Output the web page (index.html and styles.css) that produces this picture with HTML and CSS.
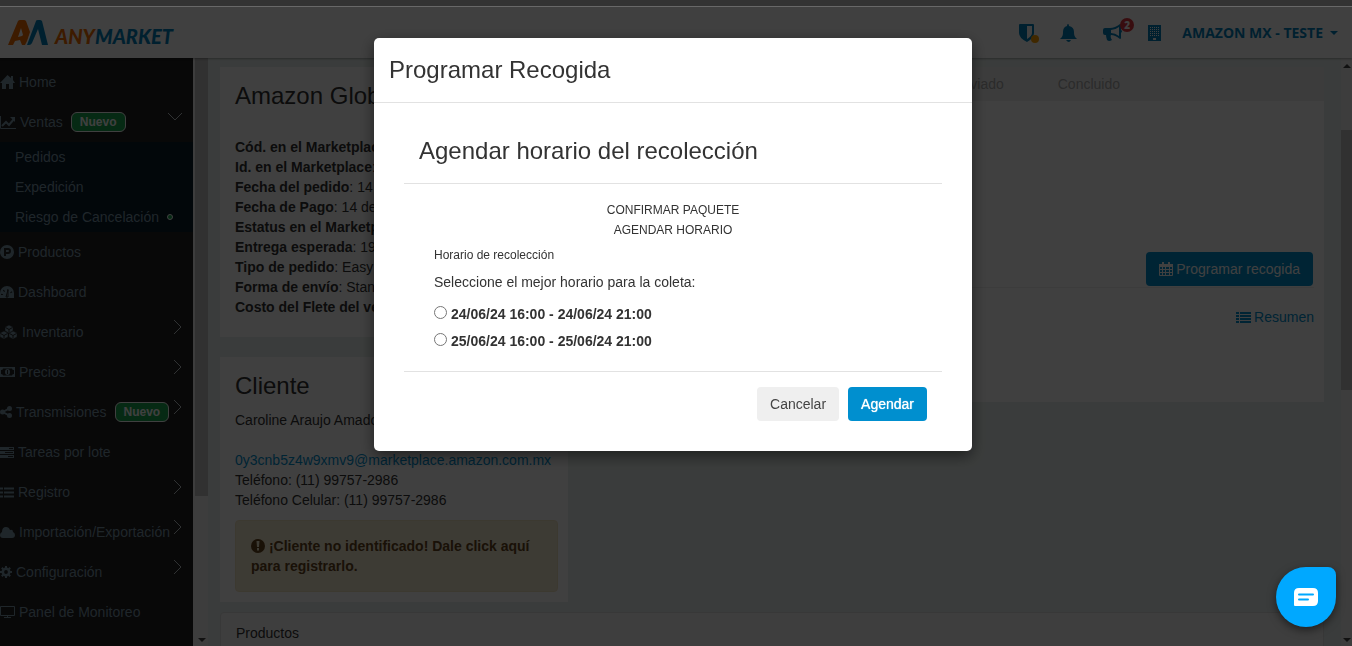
FILE: index.html
```html
<!DOCTYPE html>
<html lang="es">

<head>
    <meta charset="UTF-8">
    <meta name="viewport" content="width=device-width, initial-scale=1.0">
    <title>ANYMARKET - Programar Recogida</title>
    <link rel="stylesheet" href="styles.css">
</head>

<body>
    <div class="window-edge"></div>

    <header class="topbar">
        <a class="logo" href="#">
            <svg width="40" height="26" viewBox="0 0 40 26">
                <path fill="#f36c00" fill-rule="evenodd" d="M0 25 10 1q1-1 2-1h4q1 0 2 1l4 11-3 9-2 4h-3l-2-5-5 1-2 4zM10 17l4-1 1-1-2-7z" />
                <path fill="#0081bb" d="M19 25 28 1q0-1 2-1h2q1 0 2 1l6 24h-6L30 9l-6 14q-1 2-3 2z" />
            </svg>
            <span class="logo-text"><span class="logo-any">ANY</span>MARKET</span>
        </a>
        <nav class="tools">
            <a class="tool" href="#" title="Seguridad">
                <svg width="15" height="18" viewBox="0 0 15 18">
                    <path fill="currentColor" fill-rule="evenodd" d="M0 1q0-1 1-1h13q1 0 1 1v8q0 5-7 9Q0 14 0 9zM8 2v13q5-3 5-6V2z" />
                </svg>
                <span class="dot"></span>
            </a>
            <a class="tool" href="#" title="Avisos">
                <svg width="17" height="18" viewBox="0 0 17 18">
                    <path fill="currentColor" d="M8 0q1 0 1 2 5 1 5 6c0 4 1 5 3 7H0c2-2 3-3 3-7q0-5 4-6 0-2 1-2zM6 16h5q-2 4-5 0z" />
                </svg>
            </a>
            <a class="tool" href="#" title="Novedades">
                <svg width="19" height="17" viewBox="0 0 19 17">
                    <path fill="currentColor" fill-rule="evenodd" d="M17 0q1 0 1 1v5q2 1 0 3v5q0 1-1 1-5-4-9-4-1 2 1 5-3 2-5 0-1-3-1-5H2q-2 0-2-2V6q0-2 2-2h5q5 0 10-4zM16 3q-4 3-8 3v3q4 0 8 3z" />
                </svg>
                <span class="count">2</span>
            </a>
            <a class="tool" href="#" title="Empresa">
                <svg width="13" height="16" viewBox="0 0 13 16">
                    <path fill="currentColor" d="M0 0h13v16H0z" />
                    <path stroke="#fff" stroke-width="1" stroke-dasharray="1 1" d="M2 2.500h9M2 4.500h9M2 6.500h9M2 8.500h9M2 10.500h9" />
                    <path fill="#fff" d="M5 13h3v2H5z" />
                </svg>
            </a>
            <button class="account" type="button">AMAZON MX - TESTE <span class="caret"></span></button>
        </nav>
    </header>

    <div class="layout">
        <aside class="sidebar">
            <a class="item" href="#">
                <svg width="15" height="14" viewBox="0 0 15 14">
                    <path fill="currentColor" d="M7.500 0 11 3V1h2v4l2 3h-2v6H9V9H6v5H2V8H0z" />
                </svg>
                Home
            </a>
            <a class="item" href="#">
                <svg width="16" height="13" viewBox="0 0 16 13">
                    <path fill="none" stroke="currentColor" d="M.5 0v12.500H16" />
                    <path fill="none" stroke="currentColor" stroke-width="2" d="m2 10 4-4 3 3 5-6" />
                    <path fill="currentColor" d="M10 1h5v5z" />
                </svg>
                Ventas
                <span class="badge">Nuevo</span>
                <svg class="chevron" width="14" height="8" viewBox="0 0 14 8">
                    <path fill="none" stroke="currentColor" d="m0 0 7 7 7-7" />
                </svg>
            </a>
            <div class="submenu">
                <a href="#">Pedidos</a>
                <a href="#">Expedición</a>
                <a href="#">Riesgo de Cancelación <span class="status"></span></a>
            </div>
            <a class="item" href="#">
                <svg width="14" height="14" viewBox="0 0 14 14">
                    <circle cx="7" cy="7" r="7" fill="currentColor" />
                    <path fill="none" stroke="#242424" stroke-width="2" d="M5 11V4h3q2 0 2 2t-2 2H5" />
                </svg>
                Productos
            </a>
            <a class="item" href="#">
                <svg width="14" height="12" viewBox="0 0 14 12">
                    <path fill="currentColor" d="M0 12V7a7 7 0 0 1 14 0v5z" />
                    <path fill="none" stroke="#242424" stroke-width="2" stroke-dasharray="1 3" d="M2 9a5 5 0 0 1 10 0" />
                    <path fill="none" stroke="#242424" d="m6 11 2-7v7z" />
                </svg>
                Dashboard
            </a>
            <a class="item" href="#">
                <svg width="18" height="14" viewBox="0 0 18 14">
                    <path fill="currentColor" stroke="#242424" stroke-width=".5" d="m9 0 4 2v4L9 8 5 6V2zM4 6l4 2v4l-4 2-4-2V8zM13 6l4 2v4l-4 2-4-2V8z" />
                    <path fill="none" stroke="#242424" d="m5.500 2.500 3.500 2 3.500-2M9 4.500V7M.5 8.500l3.500 2 3.500-2M4 10.500V13M9.500 8.500l3.500 2 3.500-2M13 10.500V13" />
                </svg>
                Inventario
                <svg class="chevron" width="8" height="14" viewBox="0 0 8 14">
                    <path fill="none" stroke="currentColor" d="m0 0 7 7-7 7" />
                </svg>
            </a>
            <a class="item" href="#">
                <svg width="15" height="10" viewBox="0 0 15 10">
                    <path fill="currentColor" fill-rule="evenodd" d="M0 0h15v10H0zM3 1.500q0 1.500-2 1.500v4q2 0 2 1.500h9q0-1.500 2-1.500V3q-2 0-2-1.500z" />
                    <ellipse cx="7.500" cy="5" rx="2.500" ry="3" fill="currentColor" />
                    <path fill="#242424" d="M7 3h1v4H7z" />
                </svg>
                Precios
                <svg class="chevron" width="8" height="14" viewBox="0 0 8 14">
                    <path fill="none" stroke="currentColor" d="m0 0 7 7-7 7" />
                </svg>
            </a>
            <a class="item" href="#">
                <svg width="12" height="12" viewBox="0 0 12 12">
                    <path fill="none" stroke="currentColor" stroke-width="2" d="m9 2.500-6 3.500 6 3.500" />
                    <circle cx="2.500" cy="6" r="2.500" fill="currentColor" />
                    <circle cx="9.500" cy="2.500" r="2.500" fill="currentColor" />
                    <circle cx="9.500" cy="9.500" r="2.500" fill="currentColor" />
                </svg>
                Transmisiones
                <span class="badge">Nuevo</span>
                <svg class="chevron" width="8" height="14" viewBox="0 0 8 14">
                    <path fill="none" stroke="currentColor" d="m0 0 7 7-7 7" />
                </svg>
            </a>
            <a class="item" href="#">
                <svg width="14" height="11" viewBox="0 0 14 11">
                    <path fill="currentColor" d="M0 0h14v3H0zM0 4h14v3H0zM0 8h14v3H0z" />
                    <path stroke="#242424" d="M9 1.500h4M5 5.500h8M8 9.500h5" />
                </svg>
                Tareas por lote
            </a>
            <a class="item" href="#">
                <svg width="14" height="11" viewBox="0 0 14 11">
                    <path stroke="currentColor" stroke-width="2" d="M0 1.500h3M4 1.500h10M0 5.500h3M4 5.500h10M0 9.500h3M4 9.500h10" />
                </svg>
                Registro
                <svg class="chevron" width="8" height="14" viewBox="0 0 8 14">
                    <path fill="none" stroke="currentColor" d="m0 0 7 7-7 7" />
                </svg>
            </a>
            <a class="item" href="#">
                <svg width="15" height="11" viewBox="0 0 15 11">
                    <path fill="currentColor" d="M3 11Q0 11 0 8q0-2 2-3 0-5 4-5 3 0 4 3 3-1 3 2 2 1 2 3 0 3-3 3z" />
                </svg>
                Importación/Exportación
                <svg class="chevron" width="8" height="14" viewBox="0 0 8 14">
                    <path fill="none" stroke="currentColor" d="m0 0 7 7-7 7" />
                </svg>
            </a>
            <a class="item" href="#">
                <svg width="12" height="12" viewBox="0 0 12 12">
                    <circle cx="6" cy="6" r="3.200" fill="none" stroke="currentColor" stroke-width="2.600" />
                    <path stroke="currentColor" stroke-width="2" d="M6 0v2M6 10v2M0 6h2M10 6h2M1.800 1.800l1.400 1.400M8.800 8.800l1.400 1.400M10.200 1.800 8.800 3.200M3.200 8.800l-1.400 1.400" />
                </svg>
                Configuración
                <svg class="chevron" width="8" height="14" viewBox="0 0 8 14">
                    <path fill="none" stroke="currentColor" d="m0 0 7 7-7 7" />
                </svg>
            </a>
            <a class="item" href="#">
                <svg width="15" height="12" viewBox="0 0 15 12">
                    <path fill="none" stroke="currentColor" d="M.5.5h14v9H.5zM7.500 10v1.500M4 11.500h7" />
                </svg>
                Panel de Monitoreo
            </a>
        </aside>

        <div class="scroll scroll-left">
            <span class="thumb"></span>
            <span class="arrow arrow-down"></span>
        </div>

        <main class="content">
            <div class="columns">
                <div class="left-column">
                    <section class="panel order">
                        <h2>Amazon Global</h2>
                        <ul>
                            <li><b>Cód. en el Marketplace</b>:</li>
                            <li><b>Id. en el Marketplace</b>:</li>
                            <li><b>Fecha del pedido</b>: 14 de</li>
                            <li><b>Fecha de Pago</b>: 14 de</li>
                            <li><b>Estatus en el Marketplace</b>:</li>
                            <li><b>Entrega esperada</b>: 19 de</li>
                            <li><b>Tipo de pedido</b>: Easy</li>
                            <li><b>Forma de envío</b>: Standard</li>
                            <li><b>Costo del Flete del vendedor</b>:</li>
                        </ul>
                    </section>
                    <section class="panel customer">
                        <h2>Cliente</h2>
                        <p class="customer-name">Caroline Araujo Amador</p>
                        <p><a href="#">0y3cnb5z4w9xmv9@marketplace.amazon.com.mx</a></p>
                        <p>Teléfono: (11) 99757-2986</p>
                        <p>Teléfono Celular: (11) 99757-2986</p>
                        <div class="warning">
                            <svg width="14" height="14" viewBox="0 0 14 14">
                                <circle cx="7" cy="7" r="7" fill="currentColor" />
                                <path fill="#f4ead0" d="M5.500 2h3L8 8H6zM6 9h2v2.500H6z" />
                            </svg>
                            ¡Cliente no identificado! Dale click aquí para registrarlo.
                        </div>
                    </section>
                </div>
                <section class="panel shipping">
                    <div class="steps">
                        <span>Enviado</span>
                        <span>Concluido</span>
                    </div>
                    <div class="shipping-action">
                        <button class="btn btn-primary" type="button">
                            <svg width="14" height="14" viewBox="0 0 14 14">
                                <path fill="none" stroke="currentColor" d="M.5 2.500h13v11H.5zM1 7.500h12M1 10.500h12M3.500 5v8M6.500 5v8M10.500 5v8" />
                                <path fill="currentColor" d="M0 2h14v3H0zM3 0h2v4H3zM9 0h2v4H9z" />
                            </svg>
                            Programar recogida
                        </button>
                    </div>
                    <a class="summary" href="#">
                        <svg width="15" height="11" viewBox="0 0 15 11">
                            <path stroke="currentColor" stroke-width="2" d="M0 1h3M4 1h11M0 4h3M4 4h11M0 7h3M4 7h11M0 10h3M4 10h11" />
                        </svg>
                        Resumen
                    </a>
                </section>
            </div>
            <section class="products">Productos</section>
        </main>

        <div class="scroll scroll-right">
            <span class="arrow arrow-up"></span>
            <span class="thumb"></span>
            <span class="arrow arrow-down"></span>
        </div>
    </div>

    <div class="backdrop">
        <div class="modal" role="dialog" aria-labelledby="modal-title">
            <div class="modal-header">
                <h3 id="modal-title">Programar Recogida</h3>
            </div>
            <form class="modal-body">
                <div class="modal-header">
                    <h3>Agendar horario del recolección</h3>
                </div>
                <div class="schedule">
                    <div class="wizard">
                        <div>CONFIRMAR PAQUETE</div>
                        <div>AGENDAR HORARIO</div>
                    </div>
                    <p class="subtitle">Horario de recolección</p>
                    <p class="question">Seleccione el mejor horario para la coleta:</p>
                    <div class="option">
                        <input type="radio" id="slot-1" name="slot">
                        <label for="slot-1">24/06/24 16:00 - 24/06/24 21:00</label>
                    </div>
                    <div class="option">
                        <input type="radio" id="slot-2" name="slot">
                        <label for="slot-2">25/06/24 16:00 - 25/06/24 21:00</label>
                    </div>
                </div>
                <div class="modal-footer">
                    <button class="btn btn-default" type="button">Cancelar</button>
                    <button class="btn btn-primary btn-strong" type="button">Agendar</button>
                </div>
            </form>
        </div>
    </div>

    <button class="chat" type="button" aria-label="Chat">
        <svg width="24" height="18" viewBox="0 0 24 18">
            <path fill="#fff" d="M5 0h14q5 0 5 5v8q0 5-5 5H1q-1 0-1-1V5q0-5 5-5z" />
            <path stroke="#00a8ff" stroke-width="2" stroke-linecap="round" d="M5 6.500h14M5 11.500h9" />
        </svg>
    </button>
</body>

</html>
```

FILE: styles.css
```css
* {
    margin: 0;
    padding: 0;
    box-sizing: border-box;
}

body {
    height: 100vh;
    display: flex;
    flex-direction: column;
    overflow: hidden;
    font-family: "Liberation Sans", Arial, sans-serif;
    font-size: 14px;
    line-height: 20px;
    color: #333;
    background-color: #e8f0ee;
}

a {
    color: #008fcf;
    text-decoration: none;
}

button {
    font-family: inherit;
    font-size: 14px;
    line-height: 20px;
    border: none;
    cursor: pointer;
}

svg {
    flex-shrink: 0;
}

h2,
h3 {
    font-size: 24px;
    font-weight: 500;
    line-height: 34px;
}

ul {
    list-style: none;
}

.window-edge {
    flex: none;
    height: 7px;
    background-color: #333;
    border-bottom: 1px solid #6b6b6b;
}

/* top bar */

.topbar {
    flex: none;
    height: 51px;
    display: flex;
    align-items: center;
    justify-content: space-between;
    padding: 0 14px 0 8px;
    background-color: #fff;
    box-shadow: 0 1px 2px rgba(0, 0, 0, 0.3);
    position: relative;
}

.logo {
    display: flex;
    align-items: center;
    gap: 7px;
}

.logo-text {
    font-family: Lato, sans-serif;
    font-size: 20px;
    font-weight: 900;
    font-style: italic;
    color: #0081bb;
    padding-top: 6px;
}

.logo-any {
    color: #f36c00;
}

.tools {
    display: flex;
    align-items: center;
    gap: 26px;
}

.tool {
    position: relative;
    display: flex;
    color: #0081bb;
}

.dot {
    position: absolute;
    right: -5px;
    bottom: -1px;
    width: 8px;
    height: 8px;
    border-radius: 50%;
    background-color: #ffa000;
}

.count {
    position: absolute;
    top: -6px;
    right: -12px;
    width: 14px;
    height: 14px;
    border-radius: 50%;
    background-color: #e0353f;
    color: #fff;
    font-family: "Open Sans", sans-serif;
    font-size: 10px;
    font-weight: 800;
    line-height: 14px;
    text-align: center;
}

.account {
    display: flex;
    align-items: center;
    gap: 7px;
    margin-left: -5px;
    background: none;
    color: #0081bb;
    font-family: "Open Sans", sans-serif;
    font-weight: 700;
}

.caret {
    border: 4px solid transparent;
    border-top-color: #0081bb;
    border-bottom: none;
}

/* sidebar */

.layout {
    flex: 1;
    min-height: 0;
    display: flex;
    overflow: hidden;
}

.sidebar {
    flex: none;
    width: 193px;
    padding-top: 4px;
    overflow: hidden;
    background-color: #202020;
}

.item {
    height: 40px;
    display: flex;
    align-items: center;
    gap: 4px;
    padding-right: 11px;
    white-space: nowrap;
    color: #7d98a8;
}

.badge {
    margin-left: 4px;
    padding: 0 8px;
    border: 1px solid #fff;
    border-radius: 6px;
    background-color: #18a850;
    color: #fff;
    font-size: 12px;
    font-weight: 700;
    line-height: 18px;
}

.chevron {
    margin: 0 0 10px auto;
    color: #c0c8cc;
}

.submenu {
    background-color: #081c28;
}

.submenu a {
    height: 30px;
    display: flex;
    align-items: center;
    gap: 8px;
    padding-left: 15px;
    color: #7d98a8;
}

.status {
    width: 6px;
    height: 6px;
    border: 1px solid #fff;
    border-radius: 50%;
    background-color: #18a850;
}

/* scroll bars */

.scroll {
    flex: none;
    display: flex;
    flex-direction: column;
    align-items: center;
    background-color: #f1f1f1;
}

.scroll .thumb {
    width: 100%;
    background-color: #c1c1c1;
}

.scroll-left {
    width: 15px;
    padding: 0 0 4px 2px;
}

.scroll-left .thumb {
    height: 75%;
}

.scroll-right {
    width: 11px;
    padding: 6px 0 4px;
}

.scroll-right .thumb {
    height: 45%;
    margin-top: 62px;
}

.arrow {
    border: 4px solid transparent;
}

.arrow-up {
    border-top: none;
    border-bottom-color: #444;
}

.arrow-down {
    margin-top: auto;
    border-bottom: none;
    border-top-color: #444;
}

/* order page */

.content {
    flex: 1;
    min-width: 0;
    padding: 9px 17px 0 12px;
    overflow: hidden;
}

.columns {
    display: flex;
    align-items: flex-start;
    gap: 20px;
    margin-bottom: 10px;
}

.left-column {
    flex: none;
    width: 348px;
}

.panel {
    background-color: #fff;
}

.order {
    padding: 12px 15px 20px;
    margin-bottom: 20px;
}

.order h2 {
    margin-bottom: 24px;
}

.customer {
    padding: 12px 10px 10px 15px;
}

.customer h2 {
    margin-bottom: 7px;
}

.customer-name {
    margin-bottom: 20px;
}

.warning {
    margin-top: 10px;
    padding: 15px;
    border: 1px solid #f0e2c0;
    border-radius: 4px;
    background-color: #f4ead0;
    color: #66451c;
    font-weight: 700;
}

.warning svg {
    vertical-align: -2px;
}

.shipping {
    flex: 1;
    padding-bottom: 75px;
}

.steps {
    display: flex;
    justify-content: flex-end;
    gap: 54px;
    padding: 7px 204px 7px 0;
    background-color: #f0f0f0;
    color: #aaa;
}

.shipping-action {
    display: flex;
    justify-content: flex-end;
    margin: 0 10px 19px;
    padding: 151px 1px 1px 0;
    border-bottom: 1px solid #eee;
}

.summary {
    display: flex;
    justify-content: flex-end;
    align-items: center;
    gap: 3px;
    padding-right: 10px;
}

.products {
    padding: 10px 15px;
    border: 1px solid #ddd;
    border-radius: 4px 4px 0 0;
    background-color: #f8f8f8;
}

/* buttons */

.btn {
    height: 34px;
    display: flex;
    align-items: center;
    gap: 3px;
    padding: 0 13px;
    border-radius: 4px;
}

.btn-default {
    background-color: #efefef;
    color: #444;
}

.btn-primary {
    background-color: #008fcf;
    color: #fff;
}

.btn-strong {
    text-shadow: 0 0 1px #fff;
}

/* modal */

.backdrop {
    position: fixed;
    inset: 7px 0 0;
    padding: 31px 6px 0 0;
    background-color: rgba(0, 0, 0, 0.75);
}

.modal {
    max-width: 598px;
    margin: 0 auto;
    border-radius: 5px;
    background-color: #fff;
    box-shadow: 0 5px 15px rgba(0, 0, 0, 0.5);
}

.modal-header {
    padding: 15px;
    border-bottom: 1px solid #e2e2e2;
}

.modal-body {
    padding: 16px 30px 30px;
}

.schedule {
    padding: 16px 30px 17px;
    border-bottom: 1px solid #e2e2e2;
}

.wizard {
    margin-bottom: 5px;
    font-size: 12px;
    text-align: center;
}

.subtitle {
    margin-bottom: 7px;
    font-size: 12px;
}

.question {
    margin-bottom: 8px;
}

.option {
    display: flex;
    align-items: center;
    gap: 4px;
    height: 27px;
}

.option input {
    width: 13px;
    height: 13px;
    margin-bottom: 2px;
}

.option label {
    font-weight: 700;
}

.modal-footer {
    display: flex;
    justify-content: flex-end;
    gap: 9px;
    padding: 15px 15px 0;
}

/* chat bubble */

.chat {
    position: fixed;
    right: 16px;
    bottom: 19px;
    width: 60px;
    height: 60px;
    display: flex;
    align-items: center;
    justify-content: center;
    border-radius: 50% 8px 50% 50%;
    background-color: #00a8ff;
    box-shadow: 0 3px 8px rgba(0, 0, 0, 0.5);
}
```
